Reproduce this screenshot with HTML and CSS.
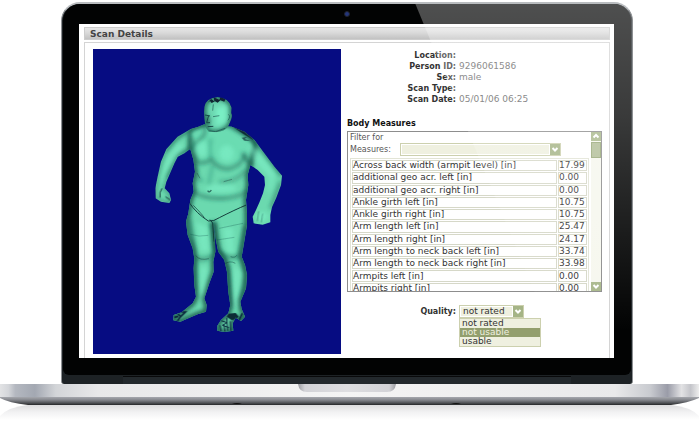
FILE: index.html
```html
<!DOCTYPE html>
<html lang="en">
<head>
<meta charset="utf-8">
<title>Scan Details</title>
<link rel="stylesheet" href="styles.css">
</head>
<body>
<div class="laptop">
  <div class="lid">
    <div class="bezel">
      <div class="camera"></div>
      <main class="screen">
        <h1 class="title">Scan Details</h1>
        <div class="panel">
          <svg class="scan" viewBox="-144 -108 744 915" role="img" aria-label="Body scan">
            <defs>
              <filter id="soft" x="-20%" y="-20%" width="140%" height="140%"><feGaussianBlur stdDeviation="6"/></filter>
              <filter id="fine" x="-20%" y="-20%" width="140%" height="140%"><feGaussianBlur stdDeviation="1.6"/></filter>
              <path id="torso" d="M190 118 L150 134 L148 192 Q160 225 162 260 L155 295 L158 320 L148 345 L142 385 L135 410 L140 450 L155 490 L160 520 L158 550 L160 600 L165 635 L155 655 L122 682 L98 690 L97 706 L118 710 L142 700 L170 688 L195 680 L197 660 L190 640 L205 595 L218 560 L217 530 L223 500 L219 411 L224 460 L232 500 L250 525 L258 560 L262 620 L268 660 L262 685 L240 705 L229 722 L229 737 L250 741 L277 737 L275 715 L284 698 L300 708 L312 695 L302 672 L298 650 L315 610 L318 570 L312 540 L302 515 L308 480 L318 420 L318 385 L315 345 L322 300 L320 270 L328 240 L345 175 L310 140 L272 125 Z"/>
              <path id="armL" d="M195 118 L150 132 L110 155 L76 193 L60 230 L50 275 L43 310 L44 340 L60 350 L85 354 L90 345 L85 325 L71 310 L76 290 L100 235 L110 215 L130 205 L150 190 L190 150Z"/>
              <path id="armR" d="M272 125 L310 140 L340 165 L370 205 L400 245 L423 272 L420 300 L405 340 L393 366 L388 390 L388 412 L365 419 L338 415 L335 395 L345 375 L356 350 L366 325 L372 300 L370 275 L350 255 L328 240 L300 210Z"/>
              <path id="head" d="M190 65 Q194 40 230 36 Q264 38 272 68 L271 84 Q276 94 268 110 L262 124 Q250 140 226 142 L203 140 L195 128 Q187 100 190 65Z"/>
              <clipPath id="body"><use href="#torso"/><use href="#armL"/><use href="#armR"/></clipPath>
              <clipPath id="face"><use href="#head"/></clipPath>
            </defs>
            <rect x="-144" y="-108" width="744" height="915" fill="#060c82"/>
            <g clip-path="url(#body)">
              <rect x="0" y="0" width="450" height="760" fill="#6bd9af"/>
              <g fill="none" stroke="#1c5f50" stroke-width="12" filter="url(#soft)">
                <use href="#torso" stroke-width="15"/>
              </g>
              <g fill="#6bdcb2" filter="url(#soft)">
                <path d="M150 140 L200 125 L280 130 L330 180 L310 235 L200 225 L158 195Z"/>
              </g>
              <g fill="none" stroke="#1d6455" stroke-width="8" filter="url(#soft)">
                <use href="#armL" stroke-width="5"/><path d="M148 135 L108 158 L74 198 M150 190 L110 213 L78 280"/>
                <path d="M272 125 L340 165 L423 272 M328 240 L305 205"/><path d="M420 290 L390 370" stroke-width="6"/>
                <path d="M150 155 Q160 190 166 232 Q195 238 211 222 Q233 258 270 250 Q305 240 312 205" opacity=".7"/>
                <path d="M211 222 Q202 195 210 160 M215 238 L203 300" opacity=".35"/>
                <path d="M160 258 Q170 285 185 288 M315 255 Q290 290 235 292" opacity=".5"/>
                <path d="M152 318 Q185 342 245 340 Q295 338 322 318" opacity=".75"/>
                <path d="M164 518 Q190 530 220 510 M238 500 Q266 530 304 507" opacity=".7"/>
                <path d="M213 412 L224 490 L258 545 L268 665" stroke-width="13"/>
                <path d="M314 420 L298 505 L316 570 L298 650 M144 400 L160 510 L163 620"/>
              </g>
              <g fill="#84f5cd" filter="url(#soft)" opacity=".5">
                <ellipse cx="182" cy="192" rx="18" ry="24"/><ellipse cx="257" cy="205" rx="23" ry="25"/>
                <path d="M320 182 L345 190 L402 266 L392 310 L378 330 L386 278 L338 225Z"/><path d="M112 175 L130 180 L75 260 L60 300 L57 280 L78 220Z"/>
                <ellipse cx="240" cy="310" rx="48" ry="13"/><path d="M165 410 L200 425 L204 500 L178 500Z"/><path d="M245 425 L278 430 L279 510 L255 500Z"/>
                <path d="M178 545 L200 545 L190 620 L177 655Z"/><path d="M278 540 L298 560 L290 660 L277 670Z"/><ellipse cx="364" cy="395" rx="17" ry="15"/>
              </g>
              <g fill="none" stroke="#143d3c" stroke-width="3" filter="url(#fine)">
                <path d="M144 352 Q167 386 202 408 Q218 410 235 398 Q282 374 316 360"/>
                <path d="M157 361 Q180 384 190 398" stroke-width="2"/><path d="M207 404 L215 414 L219 470"/>
                <path d="M250 538 Q266 525 283 535 M269 515 Q282 520 287 511 M164 512 Q177 528 204 521" opacity=".45"/>
                <path d="M228 465 L280 457 M148 448 Q173 457 202 451 M235 430 L306 415" opacity=".25"/>
                <path d="M200 317 Q205 325 211 315" stroke-width="4" opacity=".7"/><path d="M168 264 L177 280 M248 290 L273 283" opacity=".4"/>
                <path d="M63 310 Q54 322 57 338 M73 335 L88 345"/><path d="M353 379 L349 408 M365 386 L361 412" opacity=".35"/>
              </g>
              <g fill="#0d2a35"><path d="M276 126 L310 139 L333 154 L338 166 L326 158 L306 146Z"/><path d="M302 158 L318 156 L311 162 L328 167 L310 167Z" opacity=".7"/>
                <path d="M262 686 L284 684 L293 695 L284 703 L272 705 L257 695Z"/></g>
              <path d="M119 681 L133 681 L119 695 L111 687 M100 697 L112 694 M109 709 L118 695 M294 706 L304 685" fill="none" stroke="#0b293d" stroke-width="5"/>
              <path d="M240 707 L258 713 L244 721 L264 728 M257 698 L260 737 M237 721 L240 738 M268 709 L270 739 M249 718 L252 740" fill="none" stroke="#0b293d" stroke-width="3"/>
            </g>
            <g clip-path="url(#face)">
              <use href="#head" fill="#6cd8b1"/>
              <use href="#head" fill="none" stroke="#216b59" stroke-width="13" filter="url(#soft)"/>
              <g filter="url(#soft)"><path d="M225 68 L255 62 L255 110 L225 124Z" fill="#79efc5"/><path d="M190 88 L207 98 L206 122 L192 125Z" fill="#2d7965"/></g>
              <g fill="none" stroke="#184b49" stroke-width="3" filter="url(#fine)">
                <path d="M192 90 L207 93 M203 91 L197 113 L207 113 M200 125 L217 124"/>
                <path d="M216 95 L235 92 M205 137 L224 140 L252 130 M262 88 Q270 94 261 106 M217 58 L215 77" opacity=".6"/>
              </g>
              <path d="M200 53 L210 42 L220 49 L218 37 L235 44 L239 35 L253 43 L250 50 L238 46 L230 53 L222 49 L212 54 L207 48Z" fill="#102532"/>
            </g>
          </svg>

          <section class="details">
            <dl class="facts">
              <dt>Location:</dt><dd></dd>
              <dt>Person ID:</dt><dd>9296061586</dd>
              <dt>Sex:</dt><dd>male</dd>
              <dt>Scan Type:</dt><dd></dd>
              <dt>Scan Date:</dt><dd>05/01/06 06:25</dd>
            </dl>
            <h2 class="subtitle">Body Measures</h2>
            <div class="measures">
              <div class="measures-body">
                <div class="filter">
                  <label for="filter">Filter for Measures:</label>
                  <span class="picker picker-wide">
                    <select id="filter"><option></option></select>
                    <svg class="arrow" viewBox="0 0 10 11"><path d="M2.5 4 L5 6.5 L7.5 4"/></svg>
                  </span>
                </div>
                <table class="rows">
                  <tbody>
                  <tr><td>Across back width (armpit level) [in]</td><td>17.99</td></tr>
                  <tr><td>additional geo acr. left [in]</td><td>0.00</td></tr>
                  <tr><td>additional geo acr. right [in]</td><td>0.00</td></tr>
                  <tr><td>Ankle girth left [in]</td><td>10.75</td></tr>
                  <tr><td>Ankle girth right [in]</td><td>10.75</td></tr>
                  <tr><td>Arm length left [in]</td><td>25.47</td></tr>
                  <tr><td>Arm length right [in]</td><td>24.17</td></tr>
                  <tr><td>Arm length to neck back left [in]</td><td>33.74</td></tr>
                  <tr><td>Arm length to neck back right [in]</td><td>33.98</td></tr>
                  <tr><td>Armpits left [in]</td><td>0.00</td></tr>
                  <tr><td>Armpits right [in]</td><td>0.00</td></tr>
                  </tbody>
                </table>
              </div>
              <div class="scrollbar">
                <button class="step" aria-label="Scroll up"><svg viewBox="0 0 10 9"><path d="M2.5 5.5 L5 3 L7.5 5.5"/></svg></button>
                <div class="thumb"></div>
                <button class="step step-down" aria-label="Scroll down"><svg viewBox="0 0 10 9"><path d="M2.5 3 L5 5.5 L7.5 3"/></svg></button>
              </div>
            </div>
            <div class="quality">
              <label for="quality">Quality:</label>
              <div class="quality-field">
                <span class="picker">
                  <select id="quality"><option>not rated</option></select>
                  <svg class="arrow" viewBox="0 0 10 11"><path d="M2.5 4 L5 6.5 L7.5 4"/></svg>
                </span>
                <ul class="menu" role="listbox" aria-label="Quality">
                  <li role="option" aria-selected="false">not rated</li>
                  <li role="option" aria-selected="true">not usable</li>
                  <li role="option" aria-selected="false">usable</li>
                </ul>
              </div>
            </div>
          </section>
        </div>
      </main>
    </div>
    <div class="hinge"></div>
    <div class="glare"></div>
  </div>
  <svg class="base" viewBox="0 0 699 38" preserveAspectRatio="none" aria-hidden="true">
    <defs>
      <linearGradient id="deck"><stop offset="0" stop-color="#e2e3e5"/><stop offset=".012" stop-color="#d4d6da"/><stop offset=".022" stop-color="#b4b8c0"/><stop offset=".05" stop-color="#a3a8b2"/><stop offset=".08" stop-color="#d3d5d8"/><stop offset=".14" stop-color="#e8e8e9"/><stop offset=".5" stop-color="#f4f4f4"/><stop offset=".88" stop-color="#e9e9ea"/><stop offset=".93" stop-color="#c9cbd0"/><stop offset=".955" stop-color="#9a9ca8"/><stop offset=".975" stop-color="#e2e2e4"/><stop offset=".988" stop-color="#c4c5ca"/><stop offset="1" stop-color="#eee"/></linearGradient>
      <linearGradient id="under" x2="0" y2="1"><stop offset="0" stop-color="#b1b3b8"/><stop offset=".45" stop-color="#84868c"/><stop offset=".8" stop-color="#4b4d51"/><stop offset="1" stop-color="#242527"/></linearGradient>
      <linearGradient id="mirror" x2="0" y2="1"><stop offset="0" stop-color="#dcdcde"/><stop offset=".45" stop-color="#f1f1f2"/><stop offset="1" stop-color="#fff"/></linearGradient>
      <linearGradient id="notch"><stop offset="0" stop-color="#9b9ca1"/><stop offset=".07" stop-color="#d3d3d7"/><stop offset=".5" stop-color="#dedee1"/><stop offset=".93" stop-color="#d3d3d7"/><stop offset="1" stop-color="#9b9ca1"/></linearGradient>
    </defs>
    <path d="M0 32 Q8 23 28 21 H671 Q691 23 699 32 V36 H0Z" fill="url(#mirror)"/>
    <path d="M0 12 H699 V14 Q688 19 671 21 H28 Q9 19 0 14Z" fill="url(#under)"/>
    <rect width="699" height="13" fill="url(#deck)"/>
    <path d="M298 0 H396 Q395 8 387 8 H307 Q299 8 298 0Z" fill="url(#notch)"/>
    <path d="M232 20 Q237 18 242 20Z M451 20 Q456 18 461 20Z" fill="#111"/>
  </svg>
</div>
</body>
</html>
```
FILE: styles.css
```css
* { box-sizing: border-box; }
body {
  margin: 0;
  background: #fff;
  color: #333;
  font: 9px/11px "DejaVu Sans", Verdana, sans-serif;
}
h1, h2, dl, dd, ul { margin: 0; padding: 0; }
.laptop { padding-top: 2px; overflow: hidden; }

.lid {
  position: relative;
  margin: 0 66px 0 61px;
  background: #1d2225;
  border: 1px solid #8e9194;
  border-top: 2px solid #b9bcbf;
  border-bottom: 0;
  border-radius: 19px 19px 3px 3px;
}
.bezel {
  margin: 0 1px;
  padding: 0 17px 17px 16px;
  background: #020303;
  border-radius: 17px 17px 6px 6px;
}
.camera {
  width: 6px;
  height: 6px;
  margin: 0 auto;
  border: 1px solid #20222c;
  border-radius: 50%;
  background: #24367a;
  transform: translateY(7px);
}
.hinge {
  height: 8px;
  margin: 1px 61px 0;
  background: #23292d;
  border-top: 1px solid #08090a;
}
.glare {
  position: absolute;
  inset: 0 0 8px;
  border-radius: 17px 17px 6px 6px;
  background: linear-gradient(rgba(255,255,255,.3), rgba(255,255,255,.22) 30%, rgba(255,255,255,0) 88%);
  clip-path: polygon(62% 0, 100% 0, 100% 100%, 89% 100%);
  pointer-events: none;
}

.screen {
  margin-top: 14px;
  padding: 3px 4px 0 5px;
  background: #fff;
}
.title {
  height: 13px;
  padding-left: 5px;
  margin-bottom: 2px;
  border: 1px solid #ccc;
  background: linear-gradient(#e6e6e6, #d9d9d9 45%, #c2c2c2);
  color: #444;
  font-size: 9px;
  line-height: 12px;
}
.panel {
  display: grid;
  grid-template-columns: 248fr 261fr;
  gap: 6px;
  padding: 6px 1px 4px 8px;
  border: 1px solid #d4d4d4;
  border-bottom: 0;
}
.scan { display: block; width: 100%; }
.details { padding: 1px 6px 0 0; }

.facts, .quality {
  display: grid;
  grid-template-columns: 109px 1fr;
  column-gap: 3px;
}
.facts { grid-auto-rows: 11px; margin-bottom: 13px; color: #666; }
.facts dt { text-align: right; font-size: 8px; font-weight: bold; color: #333; }
.subtitle { color: #111; font-size: 8px; line-height: 12px; margin-bottom: 1px; }

.measures {
  display: flex;
  height: 161px;
  border: 1px solid #8d8d8d;
  background: #fff;
  overflow: hidden;
}
.measures-body { flex: 1; padding: 1px 2px 0 2px; overflow: hidden; }
.filter { display: flex; align-items: flex-end; height: 23px; font-size: 8px; }
.filter label { width: 50px; line-height: 12px; color: #555; }

.picker {
  display: flex;
  height: 13px;
  border: 1px solid #ccd0ae;
  background: #fff;
}
.picker select {
  flex: 1;
  min-width: 0;
  margin: 1px;
  padding: 0 2px;
  border: 0;
  border-radius: 0;
  appearance: none;
  background: #eff0e0;
  color: #333;
  font: inherit;
  line-height: 9px;
}
.picker-wide { width: 161px; }
.arrow { width: 10px; background: #a5b486; }
.arrow path, .step path { fill: none; stroke: #fff; stroke-width: 2; }

.rows {
  width: 100%;
  height: 138px;
  margin-top: 2px;
  border: 1px solid #e2e4d6;
  border-spacing: 1px 1px;
  font-size: 9px;
  line-height: 9px;
}
.rows td {
  padding: 0;
  border: 1px solid #d6d8c8;
  white-space: nowrap;
}
.rows td + td { width: 29px; }

.scrollbar {
  display: flex;
  flex-direction: column;
  width: 10px;
  background: #f6f7ee;
}
.step {
  height: 9px;
  padding: 0;
  border: 0;
  background: #a9b88b;
}
.step svg { display: block; width: 10px; height: 9px; }
.step-down { margin-top: auto; }
.thumb {
  height: 16px;
  margin-top: 1px;
  border: 1px solid #98a878;
  background: #b2be98;
}

.quality { margin-top: 13px; }
.quality label { text-align: right; font-size: 8px; font-weight: bold; line-height: 13px; }
.quality-field { position: relative; }
.quality .picker { width: 65px; }
.menu {
  position: absolute;
  top: 13px;
  left: 0;
  width: 82px;
  border: 1px solid #ccd0ae;
  background: #eff0e0;
  list-style: none;
  line-height: 9px;
}
.menu li { padding-left: 2px; }
.menu [aria-selected="true"] { background: #939f6e; color: #eff0e0; }

.base { display: block; width: 100%; height: 38px; }
```
